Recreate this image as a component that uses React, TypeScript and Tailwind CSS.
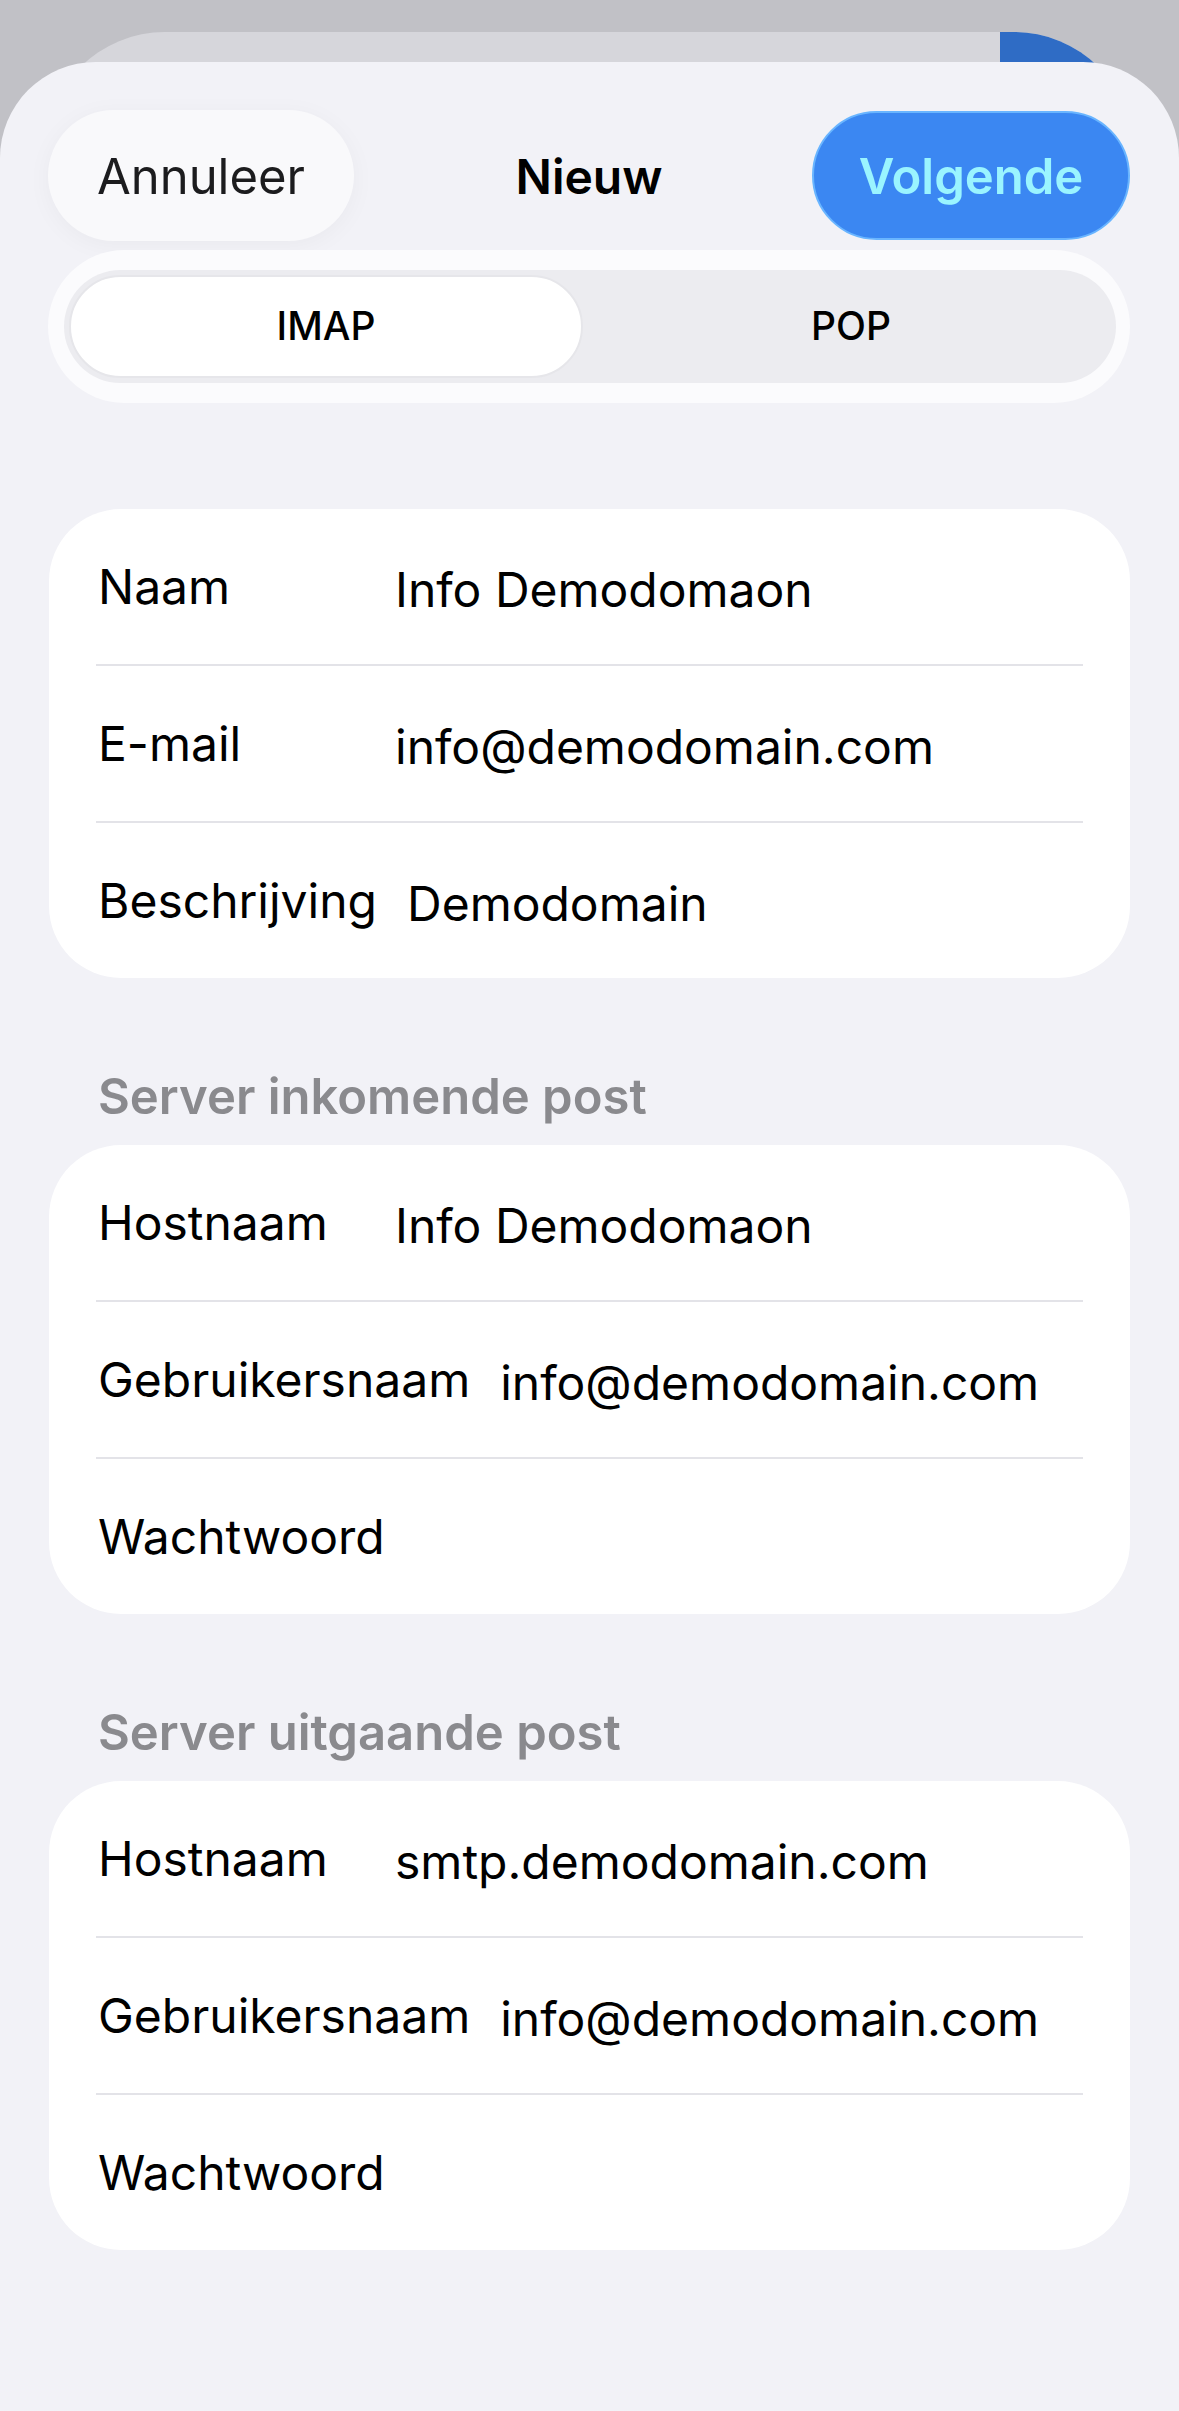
import React from "react";

interface Row {
  label: string;
  value?: string;
}

const accountRows: Row[] = [
  { label: "Naam", value: "Info Demodomaon" },
  { label: "E-mail", value: "info@demodomain.com" },
  { label: "Beschrijving", value: "Demodomain" },
];

const incomingRows: Row[] = [
  { label: "Hostnaam", value: "Info Demodomaon" },
  { label: "Gebruikersnaam", value: "info@demodomain.com" },
  { label: "Wachtwoord" },
];

const outgoingRows: Row[] = [
  { label: "Hostnaam", value: "smtp.demodomain.com" },
  { label: "Gebruikersnaam", value: "info@demodomain.com" },
  { label: "Wachtwoord" },
];

const FormCard = ({ rows }: { rows: Row[] }) => (
  <div className="mx-[49px] rounded-[72px] bg-white">
    {rows.map((row, i) => (
      <div key={row.label}>
        {i > 0 && <div className="mx-[47px] h-[2px] bg-[#e3e3e8]" />}
        <div className="flex h-[155px] items-center gap-[30px] pl-[49px] pr-[47px] text-[48px] text-black">
          <span className="min-w-[267px] whitespace-nowrap">{row.label}</span>
          {row.value && <span className="translate-y-[3px] whitespace-nowrap">{row.value}</span>}
        </div>
      </div>
    ))}
  </div>
);

const SectionHeader = ({ title }: { title: string }) => (
  <div className="mt-[90px] mb-[19px] px-[98px] text-[49px] font-semibold leading-[58px] text-[#8a8a8e]">
    {title}
  </div>
);

export default function App() {
  return (
    <div
      className="flex h-[2411px] w-[1179px] flex-col overflow-hidden bg-[#c1c1c6] pt-[32px]"
      style={{ fontFamily: "Inter, 'Noto Sans', sans-serif" }}
    >
      {/* sheet behind */}
      <div className="relative mx-[45px] h-[130px] shrink-0 overflow-hidden rounded-t-[120px] bg-[#d6d6db]">
        <div className="absolute top-0 right-0 h-full w-[134px] bg-[#2f6cc5]" />
      </div>

      {/* front sheet */}
      <div className="relative -mt-[100px] flex flex-1 flex-col rounded-t-[96px] bg-[#f2f2f7]">
        {/* nav bar */}
        <div className="grid grid-cols-[1fr_auto_1fr] items-center px-[48px] pt-[48px] pr-[49px]">
          <button className="flex h-[131px] w-[306px] items-center justify-center justify-self-start rounded-full bg-[#f9f9fb] pt-[3px] text-[49px] text-[#1c1c1e] shadow-[0_4px_24px_rgba(0,0,0,0.04)]">
            Annuleer
          </button>
          <div className="pt-[3px] text-[48px] font-semibold text-black">Nieuw</div>
          <button className="flex h-[129px] w-[318px] items-center justify-center justify-self-end rounded-full border-[2px] border-[#69b5ff] bg-[#3b87f2] pt-[3px] text-[49px] font-semibold text-[#9af4ff]">
            Volgende
          </button>
        </div>

        {/* segmented control */}
        <div className="mx-[48px] mt-[9px] mr-[49px] rounded-full bg-[#fbfbfd] px-[16px] py-[20px] pr-[14px]">
          <div className="flex h-[113px] rounded-full bg-[#ececf0] p-[5px]">
            <div className="flex w-[514px] items-center justify-center rounded-full border-[2px] border-[#e6e6ea] bg-white text-[39px] font-medium text-black">
              IMAP
            </div>
            <div className="flex flex-1 items-center justify-center pl-[8px] text-[39px] font-medium text-black">
              POP
            </div>
          </div>
        </div>

        <div className="mt-[106px]">
          <FormCard rows={accountRows} />
        </div>

        <SectionHeader title="Server inkomende post" />
        <FormCard rows={incomingRows} />

        <SectionHeader title="Server uitgaande post" />
        <FormCard rows={outgoingRows} />
      </div>
    </div>
  );
}
